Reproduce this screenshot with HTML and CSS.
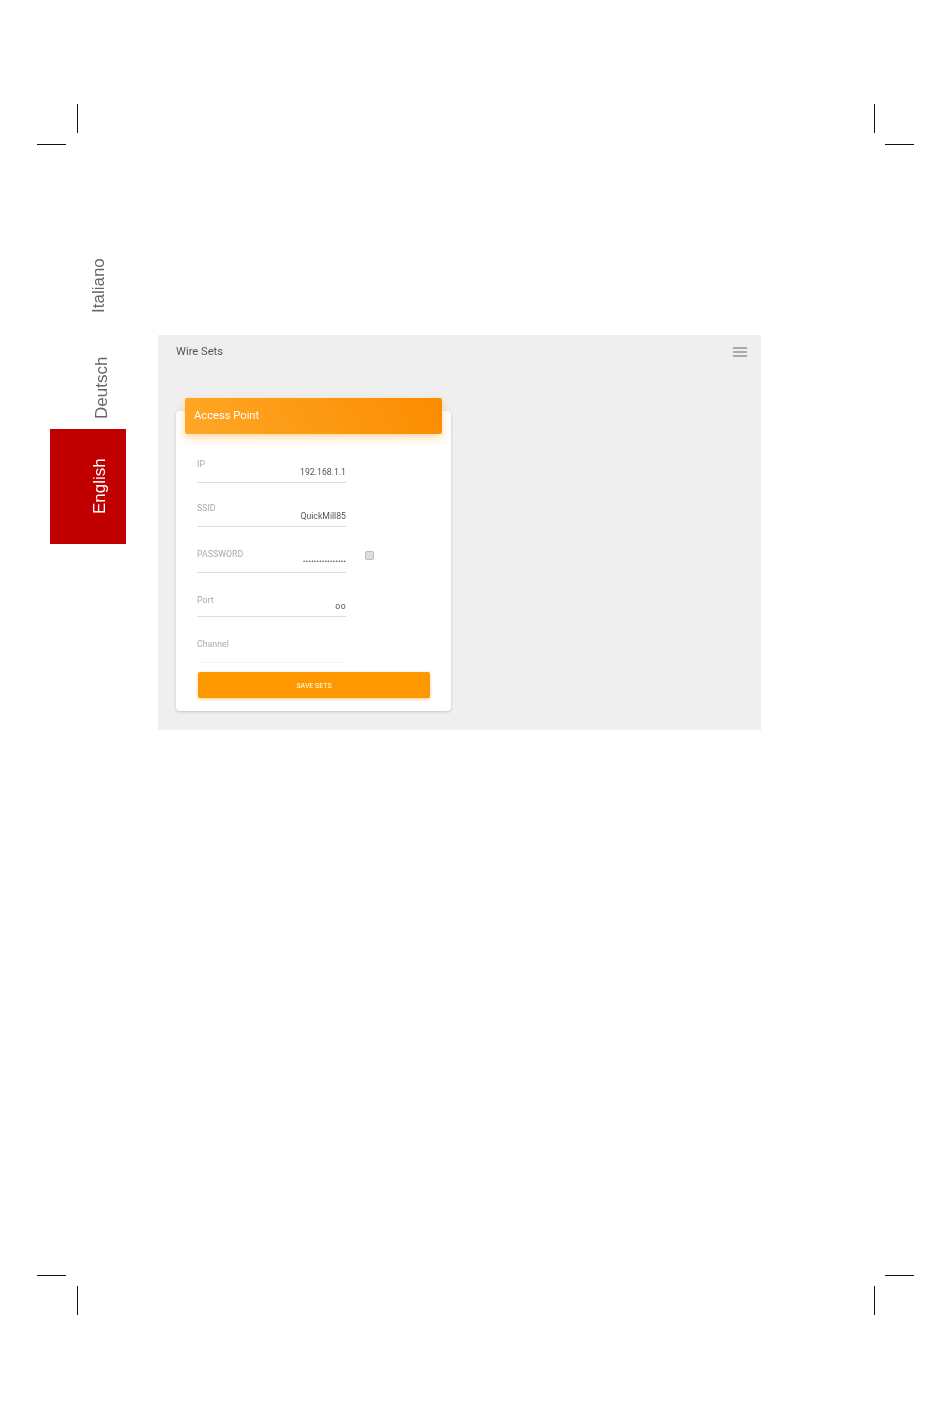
FILE: index.html
```html
<!DOCTYPE html>
<html lang="en">

<head>
    <meta charset="UTF-8">
    <meta name="viewport" content="width=device-width, initial-scale=1.0">
    <title>Wire Sets</title>
    <link rel="stylesheet" href="styles.css">
</head>

<body>
    <div class="crop crop-v" id="tl-v"></div>
    <div class="crop crop-h" id="tl-h"></div>
    <div class="crop crop-v" id="tr-v"></div>
    <div class="crop crop-h" id="tr-h"></div>
    <div class="crop crop-v" id="bl-v"></div>
    <div class="crop crop-h" id="bl-h"></div>
    <div class="crop crop-v" id="br-v"></div>
    <div class="crop crop-h" id="br-h"></div>

    <div class="page">
        <nav class="tabs">
            <div class="tab tab-it">Italiano</div>
            <div class="tab tab-de">Deutsch</div>
            <div class="tab tab-en">English</div>
        </nav>

        <main class="shot">
            <header class="topbar">
                <span class="topbar-title">Wire Sets</span>
                <svg class="menu-icon" width="14" height="10" viewBox="0 0 14 10">
                    <path d="M0 1h14M0 5h14M0 9h14" stroke="#666" stroke-width="1.2" fill="none" />
                </svg>
            </header>

            <section class="card">
                <div class="card-header">Access Point</div>
                <div class="form-item short">
                    <div class="field">
                        <label>IP</label>
                        <span class="value">192.168.1.1</span>
                    </div>
                </div>
                <div class="form-item short">
                    <div class="field">
                        <label>SSID</label>
                        <span class="value value-low">QuickMill85</span>
                    </div>
                </div>
                <div class="form-item tall">
                    <div class="field">
                        <label>PASSWORD</label>
                        <span class="value value-dots">••••••••••••••••</span>
                    </div>
                    <span class="checkbox"></span>
                </div>
                <div class="form-item short">
                    <div class="field">
                        <label class="label-low">Port</label>
                        <span class="value value-low value-port">oo</span>
                    </div>
                </div>
                <div class="form-item tall">
                    <div class="field field-faint">
                        <label>Channel</label>
                    </div>
                </div>
                <button class="save" type="button">SAVE SETS</button>
            </section>
        </main>
    </div>
</body>

</html>
```

FILE: styles.css
```css
* {
    margin: 0;
    padding: 0;
    box-sizing: border-box;
}

body {
    position: relative;
    height: 1419px;
    background-color: #fff;
    font-family: Roboto, "Liberation Sans", sans-serif;
    overflow: hidden;
}

/* print crop marks */
.crop {
    position: absolute;
    background-color: #111;
}

.crop-v {
    width: 1px;
    height: 29px;
}

.crop-h {
    width: 29px;
    height: 1px;
}

#tl-v { left: 77px; top: 104px; }
#tl-h { left: 37px; top: 144px; }
#tr-v { left: 874px; top: 104px; }
#tr-h { left: 885px; top: 144px; }
#bl-v { left: 77px; top: 1286px; }
#bl-h { left: 37px; top: 1275px; }
#br-v { left: 874px; top: 1286px; }
#br-h { left: 885px; top: 1275px; }

.page {
    display: flex;
    align-items: flex-start;
    padding: 252px 0 0 50px;
}

.tabs {
    width: 76px;
    margin-right: 32px;
    display: flex;
    flex-direction: column;
}

.tab {
    writing-mode: vertical-rl;
    transform: rotate(180deg);
    font-family: "Liberation Sans", Arial, sans-serif;
    font-size: 17px;
    color: #666;
    display: flex;
    align-items: center;
    justify-content: center;
}

.tab-it {
    height: 67px;
    padding-right: 22px;
}

.tab-de {
    height: 110px;
    padding-bottom: 28px;
    padding-right: 28px;
}

.tab-en {
    height: 115px;
    background-color: #c00000;
    color: #fff;
    padding-right: 24px;
}

.shot {
    width: 603px;
    height: 395px;
    margin-top: 83px;
    padding: 0 14px 0 18px;
    background-color: #efefef;
    filter: blur(.3px);
}

.topbar {
    height: 76px;
    padding-top: 9px;
    display: flex;
    justify-content: space-between;
    color: #555;
    font-size: 11.2px;
    line-height: 15px;
}

.menu-icon {
    margin-top: 3px;
}

.card {
    width: 275px;
    height: 300px;
    background-color: #fff;
    border-radius: 4px;
    box-shadow: 0 1px 3px rgba(0, 0, 0, .18);
    padding: 0 21px;
}

.card-header {
    position: relative;
    top: -13px;
    margin: 0 -12px -13px -12px;
    height: 36px;
    padding-left: 9px;
    line-height: 35px;
    font-size: 11.2px;
    color: #fff;
    border-radius: 2px;
    background: linear-gradient(60deg, #ffa726, #fb8c00);
    box-shadow: 0 4px 10px rgba(255, 152, 0, .35);
}

.form-item {
    display: flex;
    align-items: center;
}

.short {
    height: 44px;
}

.tall {
    height: 46px;
}

.card-header + .form-item {
    margin-top: 5px;
}

.field {
    width: 149px;
    height: 100%;
    border-bottom: 1px solid #ddd;
    display: flex;
    flex-direction: column;
    justify-content: flex-end;
    position: relative;
}

.field-faint {
    border-bottom-color: #f6f6f6;
}

.field label {
    position: absolute;
    left: 0;
    bottom: 12px;
    font-size: 8.8px;
    line-height: 11px;
    color: #aaa;
}

.field .label-low {
    bottom: 10px;
}

.value {
    text-align: right;
    font-size: 8.7px;
    line-height: 11px;
    color: #555;
    margin-bottom: 4px;
}

.value-low {
    margin-bottom: 4px;
}

.value-port {
    letter-spacing: .4px;
}

.value-dots {
    font-size: 8px;
    margin-bottom: 5px;
}

.checkbox {
    width: 9px;
    height: 9px;
    margin: 10px 0 0 19px;
    border: 1px solid #bbb;
    border-radius: 2px;
    background-color: #ddd;
}

.save {
    display: block;
    width: 232px;
    height: 26px;
    margin: 9px 0 0 1px;
    padding-top: 1px;
    border: none;
    border-radius: 2px;
    background-color: #ff9800;
    color: #fff;
    font-family: Roboto, sans-serif;
    font-size: 7px;
    box-shadow: 0 1px 3px rgba(255, 152, 0, .5);
}
```
